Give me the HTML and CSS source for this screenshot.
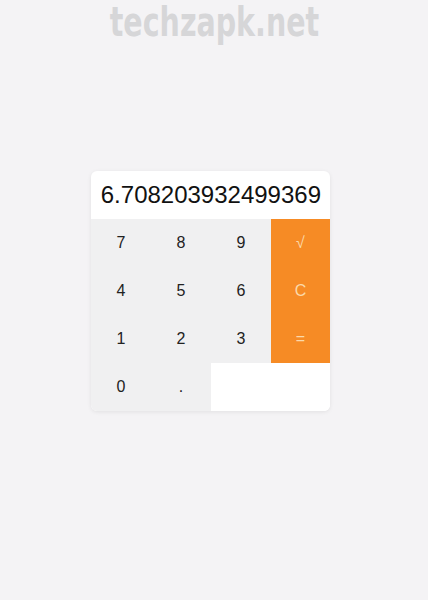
FILE: index.html
```html
<!DOCTYPE html>
<html lang="en">
  <head>
    <meta charset="UTF-8" />
    <meta name="viewport" content="width=device-width, initial-scale=1.0" />
    <title>Calculator</title>
    <link rel="stylesheet" href="styles.css">
  </head>
  <body>
    <div class="watermark">techzapk.net</div>
    <main>
      <div class="calculator">
        <div class="display" id="display">6.708203932499369</div>
        <div class="keys">
          <button class="key">7</button>
          <button class="key">8</button>
          <button class="key">9</button>
          <button class="key op">&radic;</button>
          <button class="key">4</button>
          <button class="key">5</button>
          <button class="key">6</button>
          <button class="key op">C</button>
          <button class="key">1</button>
          <button class="key">2</button>
          <button class="key">3</button>
          <button class="key op">=</button>
          <button class="key">0</button>
          <button class="key">.</button>
          <div class="blank"></div>
        </div>
      </div>
    </main>
  </body>
</html>
```

FILE: styles.css
```css
* {
  margin: 0;
  padding: 0;
  box-sizing: border-box;
  font-family: "Liberation Sans", Arial, sans-serif;
}

body {
  background-color: #f4f3f5;
  height: 600px;
  position: relative;
}

/* watermark sits over the page, not part of the layout */
.watermark {
  position: absolute;
  top: 2px;
  left: 0;
  width: 100%;
  text-align: center;
  font-family: "DejaVu Sans Condensed", "DejaVu Sans", sans-serif;
  font-weight: bold;
  font-size: 36px;
  line-height: 36px;
  color: #d6d6d8;
  transform: scale(0.88, 1.12);
  transform-origin: 50% 0;
  padding-left: 1px;
}

main {
  padding-top: 171px;
  padding-left: 91px;
}

.calculator {
  width: 239px;
  background-color: #fff;
  border-radius: 6px;
  box-shadow: 0 1px 4px rgba(0, 0, 0, 0.08);
  overflow: hidden;
}

.display {
  height: 48px;
  padding-right: 9px;
  text-align: right;
  font-size: 24px;
  line-height: 48px;
  color: #111;
}

.keys {
  display: grid;
  grid-template-columns: 60px 60px 60px 59px;
  grid-auto-rows: 48px;
}

.key {
  border: none;
  background-color: #f0f0f1;
  color: #222;
  font-size: 16px;
  cursor: pointer;
}

.op {
  background-color: #f68b25;
  color: #fbd9a9;
}

.blank {
  grid-column: span 2;
  background-color: #fff;
}
```
